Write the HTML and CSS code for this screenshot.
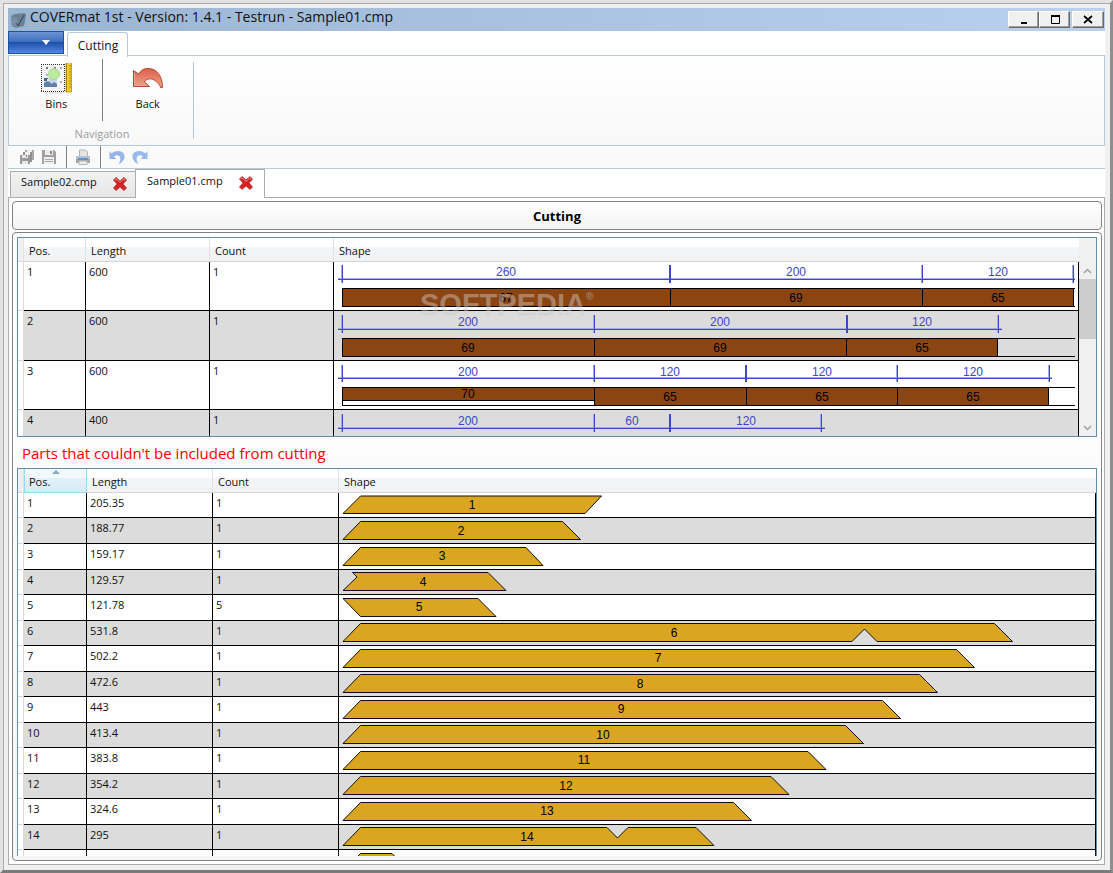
FILE: index.html
```html
<!DOCTYPE html>
<html lang="en">
<head>
<meta charset="utf-8">
<title>COVERmat 1st</title>
<link rel="stylesheet" href="styles.css">
</head>
<body>
<div class="window">
  <header class="titlebar">
    <svg class="app-icon" width="17" height="17" viewBox="0 0 17 17"><path d="M1 4l4-2 10-1 1 2-2 11-8 2-4-2z" fill="#6a8095"/><path d="M1 4l6 2 1 9-5-1z" fill="#7a8fa3"/><path d="M6 11l2 3 6-11" fill="none" stroke="#34434f"/></svg>
    <h1 class="title">COVERmat 1st - Version: 1.4.1 - Testrun - Sample01.cmp</h1>
    <div class="window-buttons">
      <button class="wbtn" aria-label="Minimize"><svg width="12" height="12"><path d="M3 9h6" stroke="#000" stroke-width="2"/></svg></button>
      <button class="wbtn" aria-label="Maximize"><svg width="12" height="12"><path d="M2 2h9" stroke="#000" stroke-width="2"/><path d="M2.500 2v7.500h8V2" fill="none" stroke="#000"/></svg></button>
      <button class="wbtn wbtn-close" aria-label="Close"><svg width="12" height="12"><path d="M2 2l8 7M10 2l-8 7" stroke="#000" stroke-width="1.700"/></svg></button>
    </div>
  </header>

  <div class="ribbon-tabs">
    <button class="app-menu" aria-label="Application menu"><svg width="8" height="5"><path d="M0 0h8L4 5z" fill="#fff"/></svg></button>
    <button class="ribbon-tab">Cutting</button>
  </div>
  <div class="ribbon">
    <div class="ribbon-group">
      <div class="ribbon-items">
        <button class="ribbon-btn">
          <svg width="32" height="32" viewBox="0 0 32 32"><path d="M3 30h22l-3 2H6z" fill="#e9e9e9"/><rect x="1.500" y="2.500" width="23" height="27" fill="#f5f5f5"/><path d="M1 2.500h24M1 29.500h24M1.500 2v28M24.500 2v28" fill="none" stroke="#333" stroke-dasharray="1 1"/><path d="M6 5h2v2H6zM14 5h2v2h-2z" fill="#777"/><path d="M20 5h2v2h-2zM6 12h2v2H6zM20 19h2v2h-2z" fill="#b5b5b5"/><rect x="4" y="16" width="13" height="9" fill="#c3d6ea"/><path d="M4 21l4-2 4 3 2-2 3 2v3H4z" fill="#5f7fa6"/><rect x="4" y="16" width="4" height="3" fill="#3d6592"/><path d="M7 17h2v2H7z" fill="#fff6b0"/><circle cx="14" cy="12" r="5.500" fill="#bde9a0" stroke="#a5d98a"/><path d="M26 1v29h5.500V1" fill="#f0cc2a" stroke="#c9a010"/><path d="M26.500 1v29" stroke="#a98600"/><path d="M29 4h2M29 7h2M29 10h2M29 13h2M29 16h2M29 19h2M29 22h2M29 25h2" stroke="#ad8b08"/></svg>
          <span>Bins</span>
        </button>
        <div class="ribbon-divider"></div>
        <button class="ribbon-btn">
          <svg width="32" height="32" viewBox="0 0 32 32"><defs><linearGradient id="red" x2="0" y2="1"><stop offset="0" stop-color="#dd5f49"/><stop offset="1" stop-color="#f0a48f"/></linearGradient></defs><path d="M1.500 8.500v16h16l-5-4.500c2-4 8-4 11-1 3 2 4.500 4 5 6.500h2C30.500 14 25 6.500 16 6.500c-4 0-7 1.500-9.500 5.500z" fill="url(#red)" stroke="#b8452f"/><path d="M2.500 11v12.500h11" fill="none" stroke="#f0a090"/></svg>
          <span>Back</span>
        </button>
      </div>
      <div class="group-label">Navigation</div>
    </div>
  </div>

  <div class="quickbar">
    <button class="qbtn" aria-label="Save all"><svg width="16" height="16" viewBox="0 0 16 16"><path d="M6 1h9v10H6z" fill="#a8a8a8"/><path d="M8 1h5v3H8z" fill="#eee"/><path d="M4 3h9v10H4z" fill="#8f8f8f"/><path d="M6 3h5v3H6z" fill="#eee"/><path d="M1 6h10v9H1z" fill="#9a9a9a"/><path d="M3 6h6v3H3zM3 12h6v3H3z" fill="#e6e6e6"/><path d="M7 6h1v2H7z" fill="#888"/></svg></button>
    <button class="qbtn" aria-label="Save"><svg width="16" height="16" viewBox="0 0 16 16"><path d="M1 1h12l2 2v12H1z" fill="#a0a0a0"/><path d="M4 1h8v5H4zM3 8h10v7H3z" fill="#eee"/><path d="M9 2h2v3H9z" fill="#888"/><path d="M4 10.500h8M4 12.500h8" stroke="#aaa"/></svg></button>
    <span class="qsep"></span>
    <button class="qbtn" aria-label="Print"><svg width="16" height="16" viewBox="0 0 16 16"><path d="M4.500 1h6l2 2v5h-8z" fill="#e6e6e6" stroke="#b5b5b5"/><path d="M1 7h14v7H1z" fill="#a5a5a5"/><path d="M1 7h14v3H1z" fill="#b9c3cf"/><path d="M3 9h10v2H3z" fill="#5a94d8"/><path d="M4 12h8v3.500H4z" fill="#eee" stroke="#b5b5b5"/></svg></button>
    <span class="qsep"></span>
    <button class="qbtn qbtn-undo" aria-label="Undo"><svg width="18" height="17" viewBox="0 0 18 17"><path d="M.5 2v8h7L5 7.500C9.500 4 14 8 9.500 15.500c8-4 8.500-13-.5-13.500-3 0-5 1-6.500 2.500z" fill="#98b5ea"/></svg></button>
    <button class="qbtn" aria-label="Redo"><svg width="18" height="17" viewBox="0 0 18 17"><path d="M16.500 2v8h-7L12 7.500C7.500 4 3 8 7.500 15.500-.5 11.500-1 2.500 8 2c3 0 5 1 6.500 2.500z" fill="#98b9ee"/></svg></button>
  </div>

  <nav class="doc-tabs">
    <div class="doc-tab">
      <button class="doc-name">Sample02.cmp</button>
      <button class="doc-close" aria-label="Close Sample02.cmp"><svg width="16" height="16" viewBox="0 0 16 16"><path d="M1.500 4L4 1.500l4 3.500 4-3.500L14.500 4 11 8l3.500 4-2.500 2.500L8 11l-4 3.500L1.500 12 5 8z" fill="#d92020" stroke="#c04545"/><path d="M3 4l1.500-1L8 6.500 11.500 3 13 4" fill="none" stroke="#ee8c8c"/></svg></button>
    </div>
    <div class="doc-tab doc-tab-active">
      <button class="doc-name">Sample01.cmp</button>
      <button class="doc-close" aria-label="Close Sample01.cmp"><svg width="16" height="16" viewBox="0 0 16 16"><path d="M1.500 4L4 1.500l4 3.500 4-3.500L14.500 4 11 8l3.500 4-2.500 2.500L8 11l-4 3.500L1.500 12 5 8z" fill="#d92020" stroke="#c04545"/><path d="M3 4l1.500-1L8 6.500 11.500 3 13 4" fill="none" stroke="#ee8c8c"/></svg></button>
    </div>
  </nav>

  <main class="document">
    <button class="section-head">Cutting</button>
    <section class="panel">
      <div class="grid grid-bars">
        <table class="data">
          <colgroup><col class="c-head"><col class="c-pos1"><col class="c-num1"><col class="c-num1"><col></colgroup>
          <thead><tr><th class="rh"></th><th>Pos.</th><th>Length</th><th>Count</th><th>Shape</th></tr></thead>
          <tbody>
            <tr><td class="rh"></td><td>1</td><td>600</td><td>1</td><td class="shape"><svg class="bars" width="100%" height="48">
              <path class="frame" d="M8.500 45V26.500H1400M8.500 44.500H1400"/>
              <path class="bar" d="M8.500 26.500h328v18h-328zM336.500 26.500h252v18h-252zM588.500 26.500h151v18h-151z"/>
              <path class="dim-soft" d="M4 16.500h737M7.500 3v18M587.500 3v18M738.500 3v18"/><path class="dim" d="M4 17.500h737M8.500 3v18M335.500 3v18M336.500 3v18M588.500 3v18M739.500 3v18"/>
              <text class="dim-text" x="172" y="14">260</text><text class="dim-text" x="462" y="14">200</text><text class="dim-text" x="664" y="14">120</text>
              <text x="172" y="40">67</text><text x="462" y="40">69</text><text x="664" y="40">65</text></svg></td></tr>
            <tr><td class="rh"></td><td>2</td><td>600</td><td>1</td><td class="shape"><svg class="bars" width="100%" height="49">
              <path class="frame" d="M8.500 46V27.500H1400M8.500 45.500H1400"/>
              <path class="bar" d="M8.500 27.500h252v18h-252zM260.500 27.500h252v18h-252zM512.500 27.500h151v18h-151z"/>
              <path class="dim-soft" d="M4 17.500h664M7.500 4v18M259.500 4v18M663.500 4v18"/><path class="dim" d="M4 18.500h664M8.500 4v18M260.500 4v18M512.500 4v18M513.500 4v18M664.500 4v18"/>
              <text class="dim-text" x="134" y="15">200</text><text class="dim-text" x="386" y="15">200</text><text class="dim-text" x="588" y="15">120</text>
              <text x="134" y="41">69</text><text x="386" y="41">69</text><text x="588" y="41">65</text></svg></td></tr>
            <tr><td class="rh"></td><td>3</td><td>600</td><td>1</td><td class="shape"><svg class="bars" width="100%" height="48">
              <path class="frame" d="M8.500 45V26.500H1400M8.500 44.500H1400"/>
              <path class="bar" d="M8.500 26.500h252v13h-252zM260.500 26.500h152v18h-152zM412.500 26.500h151v18h-151zM563.500 26.500h151v18h-151z"/>
              <path class="dim-soft" d="M4 16.500h714M7.500 4v17M259.500 4v17M562.500 4v17M714.500 4v17"/><path class="dim" d="M4 17.500h714M8.500 4v17M260.500 4v17M411.500 4v17M412.500 4v17M563.500 4v17M715.500 4v17"/>
              <text class="dim-text" x="134" y="15">200</text><text class="dim-text" x="336" y="15">120</text><text class="dim-text" x="488" y="15">120</text><text class="dim-text" x="639" y="15">120</text>
              <text x="134" y="37">70</text><text x="336" y="40">65</text><text x="488" y="40">65</text><text x="639" y="40">65</text></svg></td></tr>
            <tr><td class="rh"></td><td>4</td><td>400</td><td>1</td><td class="shape"><svg class="bars" width="100%" height="48">
              <path class="dim-soft" d="M4 17.500h487M7.500 4v18M259.500 4v18M486.500 4v18"/><path class="dim" d="M4 18.500h487M8.500 4v18M260.500 4v18M335.500 4v18M336.500 4v18M487.500 4v18"/>
              <text class="dim-text" x="134" y="15">200</text><text class="dim-text" x="298" y="15">60</text><text class="dim-text" x="412" y="15">120</text></svg></td></tr>
          </tbody>
        </table>
        <div class="scrollbar">
          <button class="sb-arrow" aria-label="Scroll up"><svg width="9" height="6"><path d="M1 5l3.500-3.500L8 5" fill="none" stroke="#a0a0a0" stroke-width="1.500"/></svg></button>
          <div class="sb-track"><div class="sb-thumb"></div></div>
          <button class="sb-arrow" aria-label="Scroll down"><svg width="9" height="6"><path d="M1 1l3.500 3.500L8 1" fill="none" stroke="#a0a0a0" stroke-width="1.500"/></svg></button>
        </div>
        <div class="watermark">SOFTPEDIA<sup>®</sup></div>
      </div>

      <p class="warning">Parts that couldn't be included from cutting</p>

      <div class="grid grid-parts">
        <table class="data">
          <colgroup><col class="c-head"><col class="c-pos2"><col class="c-num2"><col class="c-num2"><col></colgroup>
          <thead><tr><th class="rh"></th><th class="sorted">Pos.<svg class="sort-mark" width="8" height="4"><path d="M0 4l4-4 4 4z" fill="#7fa9bf"/></svg></th><th>Length</th><th>Count</th><th>Shape</th></tr></thead>
          <tbody>
            <tr><td class="rh"></td><td>1</td><td>205.35</td><td>1</td><td class="shape"><svg width="100%" height="24"><path class="part" d="M4 20.500L21.500 3H262.500L246 20.500z"/><text x="133" y="16">1</text></svg></td></tr>
            <tr><td class="rh"></td><td>2</td><td>188.77</td><td>1</td><td class="shape"><svg width="100%" height="25"><path class="part" d="M4 21.500L21.500 3.500H223.500L241.500 21.500z"/><text x="122" y="17">2</text></svg></td></tr>
            <tr><td class="rh"></td><td>3</td><td>159.17</td><td>1</td><td class="shape"><svg width="100%" height="25"><path class="part" d="M4 21.500L21.500 3.500H187L204 21.500z"/><text x="103" y="16">3</text></svg></td></tr>
            <tr><td class="rh"></td><td>4</td><td>129.57</td><td>1</td><td class="shape"><svg width="100%" height="24"><path class="part" d="M4 20.500L18 7 13.500 2.500H149L167 20.500z"/><text x="84" y="16">4</text></svg></td></tr>
            <tr><td class="rh"></td><td>5</td><td>121.78</td><td>5</td><td class="shape"><svg width="100%" height="25"><path class="part" d="M4 3.500H139L157 21.500H21.500z"/><text x="80" y="16">5</text></svg></td></tr>
            <tr><td class="rh"></td><td>6</td><td>531.8</td><td>1</td><td class="shape"><svg width="100%" height="24"><path class="part" d="M4 20.500L21.500 2.500H655.500L673.500 20.500H538L525.500 8 513 20.500z"/><text x="335" y="16">6</text></svg></td></tr>
            <tr><td class="rh"></td><td>7</td><td>502.2</td><td>1</td><td class="shape"><svg width="100%" height="25"><path class="part" d="M4 21.500L21.500 3.500H617.500L635.500 21.500z"/><text x="319" y="16">7</text></svg></td></tr>
            <tr><td class="rh"></td><td>8</td><td>472.6</td><td>1</td><td class="shape"><svg width="100%" height="24"><path class="part" d="M4 20.500L21.500 2.500H580.500L598.500 20.500z"/><text x="301" y="16">8</text></svg></td></tr>
            <tr><td class="rh"></td><td>9</td><td>443</td><td>1</td><td class="shape"><svg width="100%" height="25"><path class="part" d="M4 21.500L21.500 3.500H543.500L561.500 21.500z"/><text x="282" y="16">9</text></svg></td></tr>
            <tr><td class="rh"></td><td>10</td><td>413.4</td><td>1</td><td class="shape"><svg width="100%" height="24"><path class="part" d="M4 20.500L21.500 2.500H506.500L524.500 20.500z"/><text x="264" y="16">10</text></svg></td></tr>
            <tr><td class="rh"></td><td>11</td><td>383.8</td><td>1</td><td class="shape"><svg width="100%" height="25"><path class="part" d="M4 21.500L21.500 3.500H469L487 21.500z"/><text x="245" y="16">11</text></svg></td></tr>
            <tr><td class="rh"></td><td>12</td><td>354.2</td><td>1</td><td class="shape"><svg width="100%" height="24"><path class="part" d="M4 20.500L21.500 2.500H432L450 20.500z"/><text x="227" y="16">12</text></svg></td></tr>
            <tr><td class="rh"></td><td>13</td><td>324.6</td><td>1</td><td class="shape"><svg width="100%" height="25"><path class="part" d="M4 21.500L21.500 3.500H394.500L412.500 21.500z"/><text x="208" y="16">13</text></svg></td></tr>
            <tr><td class="rh"></td><td>14</td><td>295</td><td>1</td><td class="shape"><svg width="100%" height="24"><path class="part" d="M4 20.500L21.500 2.500H268L278.500 13 289 2.500H357L375 20.500z"/><text x="188" y="16">14</text></svg></td></tr>
            <tr><td class="rh"></td><td>15</td><td>59.07</td><td>1</td><td class="shape"><svg width="100%" height="25"><path class="part" d="M4 21.500L21.500 3.500H53L71 21.500z"/></svg></td></tr>
          </tbody>
        </table>
      </div>
    </section>
  </main>
</div>
</body>
</html>
```

FILE: styles.css
```css
* { box-sizing: border-box; }

body {
  margin: 0;
  font-family: "Open Sans", "Noto Sans", sans-serif;
  font-size: 11px;
  line-height: 16px;
  color: #111;
}

button {
  margin: 0;
  padding: 0;
  border: 0;
  background: none;
  font: inherit;
  color: inherit;
}

svg { display: block; flex: none; }

.window {
  display: flex;
  flex-direction: column;
  height: 100vh;
  padding: 5px;
  background: #f0f0f0;
  border: 3px solid;
  border-color: #e3e3e3 #8e8e8e #7b7b7b #e3e3e3;
  box-shadow: inset 1px 1px 0 #a9a9a9;
}

/* title bar */
.titlebar {
  display: flex;
  flex: none;
  align-items: center;
  height: 23px;
  padding: 0 1px 0 2px;
  background: linear-gradient(90deg, #9ab5d2, #b9d1ee);
}
.app-icon { margin-top: 2px; }
.title {
  flex: 1;
  margin: 0;
  padding: 0 0 6px 3px;
  font-size: 14px;
  font-weight: 400;
  line-height: 16px;
  white-space: nowrap;
}
.window-buttons { display: flex; }
.wbtn {
  display: flex;
  align-items: center;
  justify-content: center;
  width: 31px;
  height: 17px;
  background: #f0f0f0;
  border: 1px solid;
  border-color: #fff #696969 #696969 #fff;
  box-shadow: inset -1px -1px 0 #a0a0a0;
}
.wbtn-close { width: 32px; margin-left: 2px; }

/* ribbon */
.ribbon-tabs {
  display: flex;
  flex: none;
  align-items: flex-start;
  gap: 3px;
  height: 24px;
  background: #fff;
}
.app-menu {
  display: flex;
  align-items: center;
  justify-content: flex-end;
  width: 56px;
  height: 23px;
  padding-right: 13px;
  background: linear-gradient(#6d93d4, #3f6fbf 45%, #1d50ad 50%, #5688d8);
  border: 1px solid #1850ac;
}
.ribbon-tab {
  width: 61px;
  height: 25px;
  margin-top: 1px;
  padding: 2px 0 0 1px;
  background: #fff;
  border: 1px solid #b8c7da;
  border-bottom: 0;
  border-radius: 3px 3px 0 0;
  z-index: 1;
  font-size: 12px;
}
.ribbon {
  display: flex;
  flex: none;
  height: 91px;
  border: 1px solid #b8c7da;
  background: linear-gradient(#fff, #f8f8f8);
}
.ribbon-group {
  display: flex;
  flex-direction: column;
  width: 185px;
  margin: 6px 0;
  border-right: 1px solid #b8c7d5;
}
.ribbon-items {
  display: flex;
  flex: 1;
  padding-left: 2px;
}
.ribbon-btn {
  display: flex;
  flex: 1;
  flex-direction: column;
  align-items: center;
  justify-content: flex-start;
  gap: 2px;
}
.ribbon-divider { width: 1px; height: 62px; margin-top: -3px; background: #808080; }
.group-label {
  padding-left: 2px;
  color: #9a9a9a;
  text-align: center;
  line-height: 10px;
}

/* quick access bar */
.quickbar {
  display: flex;
  flex: none;
  align-items: center;
  height: 23px;
  padding-left: 11px;
  gap: 6px;
  border-bottom: 1px solid #b8c7da;
  background: #fafafa;
}
.qsep { width: 1px; height: 22px; margin: 0 2px 0 3px; background: #808080; }
.qbtn-undo { margin-right: -2px; }

/* document tabs */
.doc-tabs {
  display: flex;
  flex: none;
  align-items: flex-end;
  height: 28px;
  padding-left: 2px;
  background: #fff;
}
.doc-tab {
  display: flex;
  align-items: flex-start;
  width: 125px;
  height: 26px;
  padding: 2px 7px 0 10px;
  justify-content: space-between;
  background: linear-gradient(#f2f2f2, #e6e6e6);
  border: 1px solid #acacac;
  border-right: 0;
  border-bottom: 0;
}
.doc-tab-active {
  width: 130px;
  height: 29px;
  padding: 3px 10px 0 11px;
  margin-bottom: -1px;
  background: #fff;
  border-right: 1px solid #acacac;
  z-index: 1;
}
.doc-close { margin-top: 2px; }

/* document body */
.document {
  display: flex;
  flex: 1;
  flex-direction: column;
  gap: 2px;
  min-height: 0;
  padding: 3px 2px 3px 3px;
  background: #fff;
  border: 1px solid #acacac;
}
.section-head {
  flex: none;
  height: 29px;
  border: 1px solid #828282;
  border-radius: 4px;
  background: linear-gradient(#fff, #f3f3f3);
  font-size: 13px;
  font-weight: 700;
  color: #000;
}
.panel {
  display: flex;
  flex: 1;
  flex-direction: column;
  min-height: 0;
  padding: 4px;
  border: 1px solid #828282;
  border-radius: 4px;
  background: linear-gradient(#fff, #f6f6f6);
}
.grid {
  position: relative;
  display: flex;
  border: 1px solid #688caf;
  background: #fff;
  overflow: hidden;
}
.grid-bars { flex: none; height: 200px; }
.grid-parts { flex: 1; align-items: flex-start; min-height: 0; border-bottom: 0; }
.warning {
  flex: none;
  margin: 0;
  padding: 6px 5px 5px;
  font-size: 15px;
  line-height: 20px;
  color: #f00;
}

/* tables */
.data {
  flex: 1;
  table-layout: fixed;
  width: 100%;
  border-collapse: separate;
  border-spacing: 0;
}
.c-head { width: 6px; }
.c-pos1 { width: 62px; }
.c-num1 { width: 124px; }
.c-pos2 { width: 63px; }
.c-num2 { width: 126px; }
.data th {
  position: relative;
  height: 24px;
  padding: 3px 0 0 5px;
  font-weight: 400;
  text-align: left;
  border-right: 1px solid #dfe1e4;
  border-bottom: 1px solid #d5d5d5;
  background: linear-gradient(#fff 40%, #f4f5f7 41%, #f1f2f4);
}
.data th:last-child { border-right: 0; }
.data th.rh { padding: 0; background: #f0f0f0; }
.data th.sorted {
  background: linear-gradient(#f2f9fc 40%, #e1f1f9 41%, #d8ecf6);
  border: 1px solid #96d9f9;
  border-top: 0;
  padding-left: 4px;
}
.sort-mark { position: absolute; top: 1px; left: 27px; }
.data td {
  padding: 2px 0 0 3px;
  vertical-align: top;
  border-right: 1px solid #000;
  border-bottom: 1px solid #000;
  background: #fff;
}
.data tr:nth-child(even) td { background: #dcdcdc; }
.data td.rh,
.data tr:nth-child(even) td.rh {
  padding: 0;
  background: #fff;
  border-color: #d9d9d9;
}
.data td.shape { padding: 0; }
.grid-bars td.shape { padding-right: 3px; }
.data text {
  font-family: "Liberation Sans", Arial, sans-serif;
  font-size: 12px;
  text-anchor: middle;
  fill: #000;
}
.data .dim-text { fill: #4046c8; }
.frame { fill: none; stroke: #000; }
.bar { fill: #8b4513; stroke: #000; }
.dim { stroke: #4046c8; }
.dim-soft { stroke: #a4a8ee; }
.part { fill: #daa520; stroke: #111; }

/* scrollbar */
.scrollbar {
  display: flex;
  flex: none;
  flex-direction: column;
  width: 17px;
  padding-top: 24px;
  background: #f0f0f0;
}
.sb-arrow {
  display: flex;
  align-items: center;
  justify-content: center;
  height: 17px;
}
.sb-track { flex: 1; }
.sb-thumb { height: 60px; background: #cdcdcd; }

.watermark {
  position: absolute;
  left: 402px;
  top: 49px;
  font-family: "Liberation Sans", Arial, sans-serif;
  font-size: 29px;
  font-weight: 700;
  line-height: 34px;
  color: rgba(235, 235, 235, 0.35);
  text-shadow: 0 1px 1px rgba(120, 120, 120, 0.15);
  pointer-events: none;
}
.watermark sup { font-size: 10px; line-height: 10px; vertical-align: 14px; }
```
